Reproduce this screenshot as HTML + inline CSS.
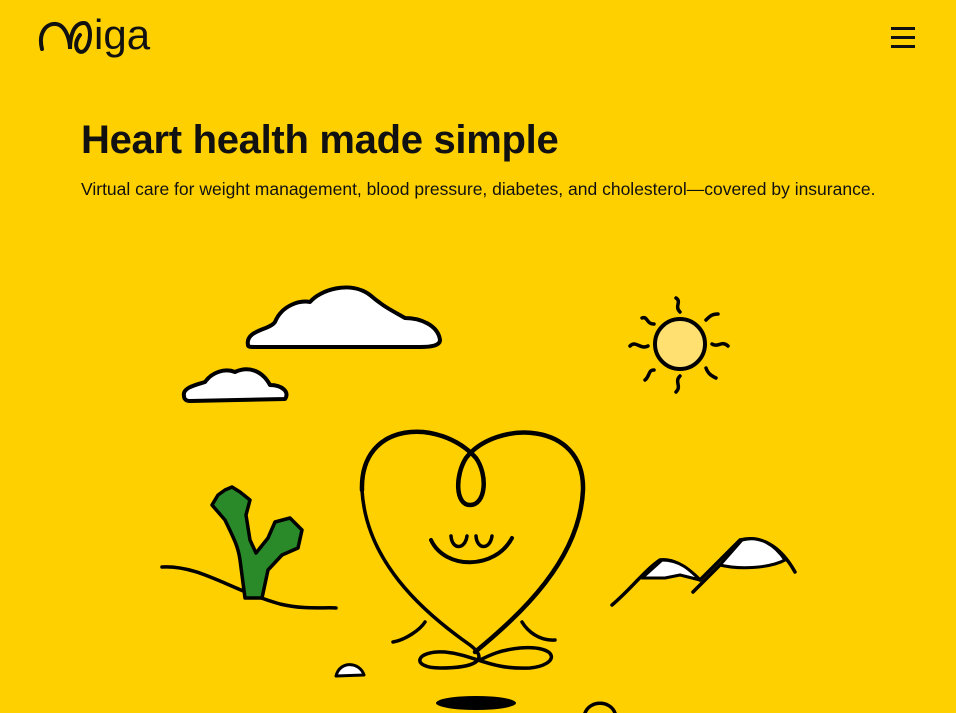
<!DOCTYPE html>
<html><head><meta charset="utf-8"><style>
body{margin:0;width:956px;height:713px;background:#FFD000;overflow:hidden;font-family:"Liberation Sans",sans-serif;position:relative}
.logo{position:absolute;left:40px;top:11px;font-size:42px;color:#111;letter-spacing:0px}
h1{position:absolute;left:81px;top:118px;margin:0;font-size:40px;font-weight:bold;color:#111;letter-spacing:-0.3px}
p{position:absolute;left:81px;top:179px;margin:0;font-size:17.5px;color:#111}
.menu{position:absolute;left:891px;top:27px;width:24px}
.menu div{height:2.5px;background:#111;margin-bottom:6.5px}
svg{position:absolute;left:0;top:0}
</style></head><body>
<div class="logo"><svg width="60" height="50" style="position:absolute;left:-2px;top:4px"><path d="M4 34 C0 18 8 8 18 9 C28 10 32 26 32 34 C32 20 36 8 46 8 C54 8 54 30 46 36 C40 40 34 30 42 20" fill="none" stroke="#111" stroke-width="4" stroke-linecap="round"/></svg><span style="margin-left:54px">iga</span></div>
<div class="menu"><div></div><div></div><div></div></div>
<h1>Heart health made simple</h1>
<p>Virtual care for weight management, blood pressure, diabetes, and cholesterol—covered by insurance.</p>
<svg width="956" height="713" fill="none" stroke="#000" stroke-linecap="round" stroke-linejoin="round">
<path d="M248 345 C245 330 270 330 275 322 C282 305 300 300 310 302 C320 290 350 280 370 295 C385 308 395 312 405 318 C420 318 438 325 440 340 C440 346 430 347 420 347 L258 347 C250 347 248 347 248 345Z" fill="#fff" stroke-width="4"/>
<path d="M184 396 C182 388 195 385 205 382 C212 372 225 368 235 372 C248 366 262 370 270 385 C282 385 290 392 285 399 L190 401 C186 401 184 399 184 396Z" fill="#fff" stroke-width="4"/>
<circle cx="680" cy="344" r="25" fill="#FFE070" stroke-width="4"/>
<g stroke-width="3.5"><path d="M676 298 C682 302 674 306 680 312"/><path d="M680 376 C674 382 682 386 676 392"/><path d="M630 346 C636 340 640 350 648 346"/><path d="M712 344 C718 348 722 340 728 346"/><path d="M642 318 C648 316 646 324 654 324"/><path d="M706 320 C710 316 712 314 718 314"/><path d="M645 380 C650 376 648 370 654 370"/><path d="M706 368 C708 374 712 376 716 378"/></g>
<path d="M162 567 C200 565 230 590 280 604 C305 610 325 607 336 608" stroke-width="3.5"/>
<path d="M245 598 L240 560 C238 545 232 535 225 520 L212 505 L218 495 L225 490 L232 487 L240 492 L250 500 L246 515 L250 540 L256 553 L268 538 L275 522 L290 518 L302 530 L298 548 L282 555 L268 570 L262 598 Z" fill="#2a8a2a" stroke-width="3.5"/>
<path d="M612 605 C630 590 645 570 660 560 C675 558 690 570 700 580 L740 540 C760 535 780 545 795 572" stroke-width="3.5"/>
<path d="M642 578 L662 560 C680 560 690 570 700 580 L680 575 L665 578 Z" fill="#fff" stroke-width="3"/>
<path d="M720 565 L742 540 C760 535 775 545 785 560 C770 568 740 570 720 565Z" fill="#fff" stroke-width="3"/>
<path d="M693 592 L720 565" stroke-width="3.5"/>
<path d="M362 490 C360 420 440 418 476 458 C488 475 486 505 470 505 C455 505 455 475 466 458 C495 420 585 420 583 490 C580 560 520 615 475 652" stroke-width="4.5"/>
<path d="M362 490 C366 560 420 610 470 645 C490 660 475 668 440 668 C410 668 415 650 445 652 C475 655 490 670 530 668 C560 665 560 645 520 648 C500 650 490 655 480 660" stroke-width="3.5"/>
<path d="M431 540 C445 570 495 570 512 538" stroke-width="4"/>
<path d="M451 536 C452 550 465 550 467 536 M476 536 C477 550 490 550 492 536" stroke-width="3.5"/>
<path d="M393 642 C405 640 420 630 425 622 M522 622 C528 632 540 641 555 640" stroke-width="3.5"/>
<path d="M336 676 C340 660 360 662 364 675 Z" fill="#fff" stroke-width="3"/>
<ellipse cx="476" cy="703" rx="40" ry="7" fill="#000" stroke="none"/>
<path d="M585 713 C590 700 610 700 615 713" stroke-width="3.5"/>
</svg>
</body></html>
